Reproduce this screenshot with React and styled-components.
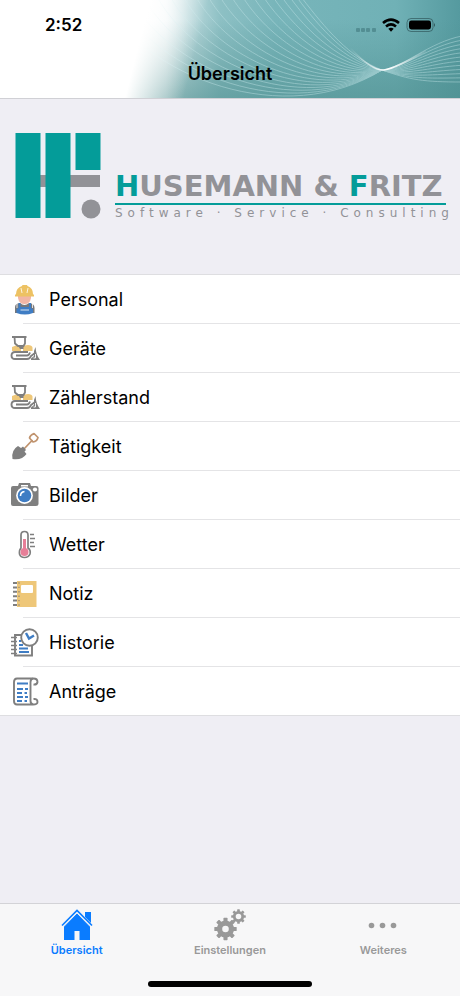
import React from 'react';
import styled, { createGlobalStyle } from 'styled-components';

const Teal = '#049c99';
const LogoGray = '#929297';
const IconGray = '#7f7f7f';
const IconBlue = '#3f7dc4';
const IconYellow = '#eec779';
const LineColor = '#dedee1';
const ActiveColor = '#0a7cff';
const InactiveColor = '#999999';

const GlobalStyle = createGlobalStyle`
  * {
    box-sizing: border-box;
  }

  body {
    margin: 0;
    background: #efeef4;
    font-family: Inter, 'Liberation Sans', sans-serif;
    color: #000;
  }

  button {
    font-family: inherit;
    border: 0;
    padding: 0;
    background: none;
    cursor: pointer;
  }
`;

const Page = styled.div`
  display: flex;
  flex-direction: column;
  min-height: 100vh;
`;

const Header = styled.header`
  position: relative;
  display: flex;
  flex-direction: column;
  height: 99px;
  border-bottom: 1px solid #d0d0d5;
  overflow: hidden;
`;

const HeaderArt = styled.svg`
  position: absolute;
  inset: 0;
  width: 100%;
  height: 100%;
`;

const StatusBar = styled.div`
  position: relative;
  display: flex;
  align-items: center;
  justify-content: space-between;
  height: 50px;
  padding: 0 24px 0 45px;
`;

const Clock = styled.time`
  font-size: 17px;
  font-weight: 600;
  line-height: 20px;
`;

const StatusIcons = styled.svg`
  display: block;
  width: 82px;
  height: 20px;
`;

const Title = styled.h1`
  position: relative;
  margin: 0;
  font-size: 18px;
  font-weight: 600;
  line-height: 48px;
  text-align: center;
`;

const Brand = styled.section`
  display: flex;
  align-items: flex-end;
  gap: 14px;
  height: 175px;
  padding: 0 12px 52px 15px;
`;

const BrandMark = styled.svg`
  display: block;
  flex: none;
  width: 86px;
  height: 90px;
`;

const BrandText = styled.div`
  flex: none;
  font-family: 'DejaVu Sans', Verdana, sans-serif;
  color: ${LogoGray};
  white-space: nowrap;
`;

const BrandName = styled.p`
  margin: 0;
  border-bottom: 2px solid ${Teal};
  font-size: 29px;
  font-weight: 700;
  line-height: 34px;

  span {
    color: ${Teal};
  }
`;

const BrandClaim = styled.p`
  margin: 0 -8px 0 0;
  font-size: 12px;
  line-height: 17px;
  letter-spacing: 5px;
`;

const Menu = styled.ul`
  margin: 0;
  padding: 0;
  list-style: none;
  background: #fff;
  border-top: 1px solid ${LineColor};
  border-bottom: 1px solid ${LineColor};
`;

const MenuItem = styled.li`
  &:not(:first-child)::before {
    content: '';
    display: block;
    height: 1px;
    margin-left: 23px;
    background: #e4e4e6;
  }
`;

const MenuButton = styled.button`
  display: flex;
  align-items: center;
  gap: 9px;
  width: 100%;
  height: 48px;
  padding: 1px 10px 0;
  font-size: 18px;
  line-height: 24px;
  color: #000;
  text-align: left;
`;

const MenuIcon = styled.svg`
  display: block;
  flex: none;
  width: 30px;
  height: 30px;
`;

const TabBar = styled.nav`
  margin-top: auto;
  height: 93px;
  background: #f7f7f8;
  border-top: 1px solid #d3d3d7;
  display: flex;
  flex-direction: column;
  justify-content: space-between;
  align-items: center;
`;

const Tabs = styled.div`
  display: flex;
  width: 100%;
`;

const Tab = styled.button`
  flex: 1;
  display: flex;
  flex-direction: column;
  align-items: center;
  padding-top: 4px;
  font-size: 11px;
  font-weight: 600;
  line-height: 16px;
  color: ${({ $active }) => ($active ? ActiveColor : InactiveColor)};

  svg {
    display: block;
    width: 34px;
    height: 34px;
  }
`;

const HomeIndicator = styled.div`
  width: 164px;
  height: 6px;
  margin-bottom: 9px;
  border-radius: 3px;
  background: #000;
`;

const leftWaves = Array.from({ length: 19 }, (_, i) => {
  const t = (i / 18) ** 1.3;
  return `M${302 - 200 * t} -2 C${325 - 180 * t} ${28 + 50 * t} ${350 - 65 * t} ${58 + 72 * t} 382 70`;
});

const rightWaves = Array.from({ length: 12 }, (_, i) => {
  const t = i / 11;
  return `M382 70 C${402 + 8 * t} ${68 + 12 * t} ${430 - 6 * t} ${42 + 40 * t} 462 ${36 + 46 * t}`;
});

const Backdrop = () => (
  <HeaderArt viewBox="0 0 460 98" preserveAspectRatio="xMaxYMid slice" aria-hidden="true">
    <defs>
      <linearGradient id="sky" x1="0" y1="0" x2="1" y2="0">
        <stop offset="0.3" stopColor="#fdfefe" />
        <stop offset="0.36" stopColor="#f0f6f7" />
        <stop offset="0.41" stopColor="#bddadd" />
        <stop offset="0.48" stopColor="#8dc0c4" />
        <stop offset="0.6" stopColor="#78b5ba" />
        <stop offset="0.86" stopColor="#70b1b6" />
        <stop offset="1" stopColor="#559a9f" />
      </linearGradient>
      <linearGradient id="shade" x1="0" y1="0" x2="0" y2="1">
        <stop offset="0.2" stopColor="#4f8f8f" stopOpacity="0" />
        <stop offset="1" stopColor="#4f8f8f" stopOpacity="0.6" />
      </linearGradient>
      <linearGradient id="edge" gradientUnits="userSpaceOnUse" x1="150" y1="0" x2="205" y2="14">
        <stop offset="0" stopColor="#fff" />
        <stop offset="1" stopColor="#fff" stopOpacity="0" />
      </linearGradient>
      <linearGradient id="glow" x1="0" y1="0" x2="1" y2="0">
        <stop offset="0" stopColor="#fff" stopOpacity="0" />
        <stop offset="0.5" stopColor="#fff" />
        <stop offset="1" stopColor="#fff" stopOpacity="0.1" />
      </linearGradient>
    </defs>
    <rect width="460" height="98" fill="url(#sky)" />
    <rect x="120" width="340" height="98" fill="url(#shade)" />
    <g fill="none" stroke="#c4e6e8" strokeWidth="0.8" opacity="0.55">
      {leftWaves.map(d => <path key={d} d={d} />)}
      {rightWaves.map(d => <path key={d} d={d} />)}
    </g>
    <path d="M350 48 Q372 71 384 70 Q396 68 426 51" fill="none" stroke="url(#glow)" strokeWidth="1.6" />
    <rect width="460" height="98" fill="url(#edge)" />
  </HeaderArt>
);

const Status = () => (
  <StatusIcons viewBox="0 0 82 20" aria-hidden="true">
    <g fill="#41797e" opacity="0.6">
      <rect x="2" y="13" width="4" height="4" rx="1" />
      <rect x="7" y="13" width="4" height="4" rx="1" />
      <rect x="12" y="13" width="4" height="4" rx="1" />
      <rect x="18" y="13" width="4" height="4" rx="1" />
    </g>
    <g fill="none" stroke="#000" strokeWidth="2.6">
      <path d="M29 8 Q37 1.2 45 8" />
      <path d="M32 11.5 Q37 7.3 42 11.5" />
    </g>
    <path d="M34.3 13.8 Q37 11.8 39.7 13.8 L37 16.7 Z" />
    <rect x="53" y="3.5" width="26" height="13" rx="4" fill="none" stroke="#31595d" strokeOpacity="0.7" />
    <rect x="55" y="5.5" width="22" height="9" rx="2.4" />
    <path d="M80 8 Q82 10 80 12 Z" fill="#31595d" />
  </StatusIcons>
);

const WorkerIcon = () => (
  <>
    <path d="M8 11 H21 V13 Q20 19 14.5 19 Q9 19 8 13 Z" fill="#f1b6a5" />
    <path d="M6 9 Q6 3 12 1 L12.5 0 H17 L17.5 1 Q23 3 23 9 L24 10 V11.5 H5 V10 Z" fill="#edc263" />
    <path d="M11 3 L12 8 M18 3 L17 8" stroke="#fff" strokeWidth="0.8" />
    <path d="M5 28 V22 Q5 18.5 10 18 Q14.5 22 19 18 Q24.5 18.5 24.5 23 V28 Z" fill="#77787b" />
    <path d="M8.5 18 H10.5 V22 H19 V18 H21 V23 L23 24 V28 Q15 31 6.5 28 V24 L8.5 23 Z" fill={IconBlue} />
    <path d="M10.5 25 H19 M7 18.5 V23 M22.5 18.5 V23" stroke="#fff" strokeWidth="0.8" />
  </>
);

const DozerIcon = () => (
  <>
    <path d="M2 13 L6 11.5 H11 V17 H2 Z M13 13 Q14 11 18 11 Q22 11 22.5 13.5 V17 H13 Z" fill={IconYellow} />
    <path d="M2 3 H16.5" stroke={IconGray} strokeWidth="2" />
    <path d="M4.5 3 L5 9.5 L8 12 H13.5 L15 9.5 V3" fill="none" stroke={IconGray} strokeWidth="1.8" />
    <path d="M8 11.5 H13.5 V15 H10 Z" fill={IconGray} />
    <path d="M18 18 H5 Q1.5 18 1.5 21.5 Q1.5 25 5 25 H17 Q20 25 21 22 L25 19" fill="none" stroke={IconGray} strokeWidth="1.9" />
    <path d="M6 21.5 H17 Q19 21.5 20 18.5" fill="none" stroke={IconGray} strokeWidth="1.9" />
    <path d="M25.5 13 Q26 21 30 26 H21 V24.5 L24 22 V17 Z" fill={IconGray} />
    <path d="M25.5 20 V24 H23.5" fill="none" stroke="#fff" strokeWidth="0.9" />
  </>
);

const ShovelIcon = () => (
  <>
    <path d="M13 18 L22.5 8" stroke="#c0936e" strokeWidth="1.8" />
    <path d="M19.5 6 Q20 3 24 1.5 L28 5.5 Q27 9.5 23 10 Z" fill="none" stroke="#c0936e" strokeWidth="1.7" strokeLinejoin="round" />
    <path d="M8 14 L11 16 L13 14.5 L16 18 L14.5 19.5 L16.5 22 Q12 28.5 2.5 27 Q1 18 8 14 Z" fill={IconGray} />
  </>
);

const CameraIcon = () => (
  <>
    <path d="M3 5 H8 L9 2 H20 L21 5 H26 Q28.5 5 28.5 7 V23 Q28.5 25 26 25 H3 Q1 25 1 23 V7 Q1 5 3 5 Z" fill={IconGray} />
    <path d="M11 5.5 V4 H18 V5.5 Z" fill="#fff" />
    <circle cx="14.5" cy="14.5" r="8.4" fill="#fff" />
    <circle cx="14.5" cy="14.5" r="6.8" fill={IconBlue} />
    <path d="M10.5 15 Q10.5 11 14.5 10.5" fill="none" stroke="#fff" strokeWidth="1.6" />
    <circle cx="25" cy="8.5" r="2.1" fill="#fff" />
  </>
);

const ThermometerIcon = () => (
  <>
    <path d="M11 18 V5 Q11 1.5 14.5 1.5 Q18 1.5 18 5 V18 Q21 20 20 24 Q18.5 27.5 14.5 27.5 Q10.5 27.5 9.5 24 Q9 20 11 18 Z" fill="#fff" stroke={IconGray} strokeWidth="1.7" />
    <path d="M14.5 9 V22" stroke="#e77f98" strokeWidth="3" />
    <circle cx="14.5" cy="22" r="4" fill="#e77f98" />
    <path d="M20 4.5 H24 M20 8.5 H25 M20 12.5 H24 M20 16.5 H25" stroke={IconGray} strokeWidth="1.7" />
  </>
);

const NotebookIcon = () => (
  <>
    <path d="M7 2 H26.5 V28 H7 Z" fill={IconYellow} />
    <rect x="11" y="6" width="12" height="8" rx="1" fill="#fff" />
    <path d="M3 4 H7 M3 8.4 H7 M3 12.8 H7 M3 17.2 H7 M3 21.6 H7 M3 26 H7" stroke={IconGray} strokeWidth="2" />
    <path d="M8.5 4 H9.5 M8.5 8.4 H9.5 M8.5 12.8 H9.5 M8.5 17.2 H9.5 M8.5 21.6 H9.5 M8.5 26 H9.5" stroke={IconGray} strokeWidth="1.4" />
  </>
);

const HistoryIcon = () => (
  <>
    <path d="M12 7 H5 V27.5 H22 V17" fill="none" stroke={IconGray} strokeWidth="1.9" />
    <path d="M1 9.5 H7 M1 13.5 H7 M1 17.5 H7 M1 21.5 H7 M1 25.5 H7" stroke={IconGray} strokeWidth="1.7" strokeDasharray="4 1 1" />
    <path d="M9 13 H11 M9 17 H13 M9 20.5 H18 M9 24 H19" stroke={IconBlue} strokeWidth="1.8" />
    <circle cx="19.5" cy="9.5" r="8.3" fill="#fff" stroke={IconGray} strokeWidth="1.9" />
    <path d="M16 5 L19 10.5 L24 7.5" fill="none" stroke={IconBlue} strokeWidth="2.4" />
  </>
);

const ScrollIcon = () => (
  <>
    <path d="M23 1.5 H7 Q4 1.5 4 5 V24 Q4 27.5 7 27.5 H23 Q20.5 26.5 20.5 24 V5 Q20.5 1.5 23.5 1.5 Q27.5 1.5 27.5 5 Q27 8 23.5 7.5 M23.5 22 Q27.5 21.5 27.5 25 Q27.5 27.5 23 27.5" fill="none" stroke={IconGray} strokeWidth="1.9" />
    <path d="M7 6.5 H18 M7 12 H13 M15 12 H18 M7 16 H12 M14.5 16 H17 M7 20 H13 M15 20 H18 M7 24 H12 M14.5 24 H17" stroke={IconBlue} strokeWidth="1.9" />
  </>
);

const entries = [
  { label: 'Personal', Icon: WorkerIcon },
  { label: 'Geräte', Icon: DozerIcon },
  { label: 'Zählerstand', Icon: DozerIcon },
  { label: 'Tätigkeit', Icon: ShovelIcon },
  { label: 'Bilder', Icon: CameraIcon },
  { label: 'Wetter', Icon: ThermometerIcon },
  { label: 'Notiz', Icon: NotebookIcon },
  { label: 'Historie', Icon: HistoryIcon },
  { label: 'Anträge', Icon: ScrollIcon }
];

const HouseIcon = () => (
  <svg viewBox="0 0 34 34" fill="currentColor" aria-hidden="true">
    <path d="M17 5 L30 18 V32 H19.5 V23 H14.5 V32 H4 V18 Z" />
    <path d="M2 17.5 L17 2.5 L32 17.5" fill="none" stroke="currentColor" strokeWidth="1.6" />
    <path d="M3.5 18.8 L17 5 L30.5 18.8" fill="none" stroke="#f7f7f8" strokeWidth="0.9" />
    <path d="M25 4 H31 V15 L25 9 Z" />
  </svg>
);

const Gear = ({ x, y, r, hole, teeth }) => (
  <g transform={`translate(${x} ${y})`}>
    <circle r={(r + hole) / 2} fill="none" stroke="currentColor" strokeWidth={r - hole} />
    {Array.from({ length: teeth }, (_, i) => (
      <rect
        key={i}
        x={-r * 0.24}
        y={-r * 1.3}
        width={r * 0.48}
        height={r * 0.5}
        rx={r * 0.08}
        fill="currentColor"
        transform={`rotate(${(i * 360) / teeth})`}
      />
    ))}
  </g>
);

const GearsIcon = () => (
  <svg viewBox="0 0 34 34" aria-hidden="true">
    <Gear x={12.5} y={21} r={8.6} hole={3.3} teeth={8} />
    <Gear x={25.5} y={8.5} r={5.6} hole={2.8} teeth={8} />
  </svg>
);

const MoreIcon = () => (
  <svg viewBox="0 0 34 34" fill="currentColor" aria-hidden="true">
    <circle cx="5.5" cy="17.5" r="2.8" />
    <circle cx="16.5" cy="17.5" r="2.8" />
    <circle cx="27.5" cy="17.5" r="2.8" />
  </svg>
);

const App = () => (
  <>
    <GlobalStyle />
    <Page>
      <Header>
        <Backdrop />
        <StatusBar>
          <Clock>2:52</Clock>
          <Status />
        </StatusBar>
        <Title>Übersicht</Title>
      </Header>
      <main>
        <Brand>
          <BrandMark viewBox="0 0 86 90" aria-hidden="true">
            <rect x="20" y="43" width="65" height="12" fill={LogoGray} />
            <rect x="0.5" y="1" width="25" height="85" fill={Teal} />
            <rect x="30.5" y="1" width="25" height="85" fill={Teal} />
            <rect x="60.5" y="1" width="25" height="37" fill={Teal} />
            <circle cx="76" cy="77" r="9.5" fill={LogoGray} />
          </BrandMark>
          <BrandText>
            <BrandName><span>H</span>USEMANN &amp; <span>F</span>RITZ</BrandName>
            <BrandClaim>Software · Service · Consulting</BrandClaim>
          </BrandText>
        </Brand>
        <Menu>
          {entries.map(({ label, Icon }) => (
            <MenuItem key={label}>
              <MenuButton type="button">
                <MenuIcon viewBox="0 0 30 30" aria-hidden="true"><Icon /></MenuIcon>
                {label}
              </MenuButton>
            </MenuItem>
          ))}
        </Menu>
      </main>
      <TabBar>
        <Tabs>
          <Tab type="button" $active aria-current="page"><HouseIcon />Übersicht</Tab>
          <Tab type="button"><GearsIcon />Einstellungen</Tab>
          <Tab type="button"><MoreIcon />Weiteres</Tab>
        </Tabs>
        <HomeIndicator />
      </TabBar>
    </Page>
  </>
);

export default App;
